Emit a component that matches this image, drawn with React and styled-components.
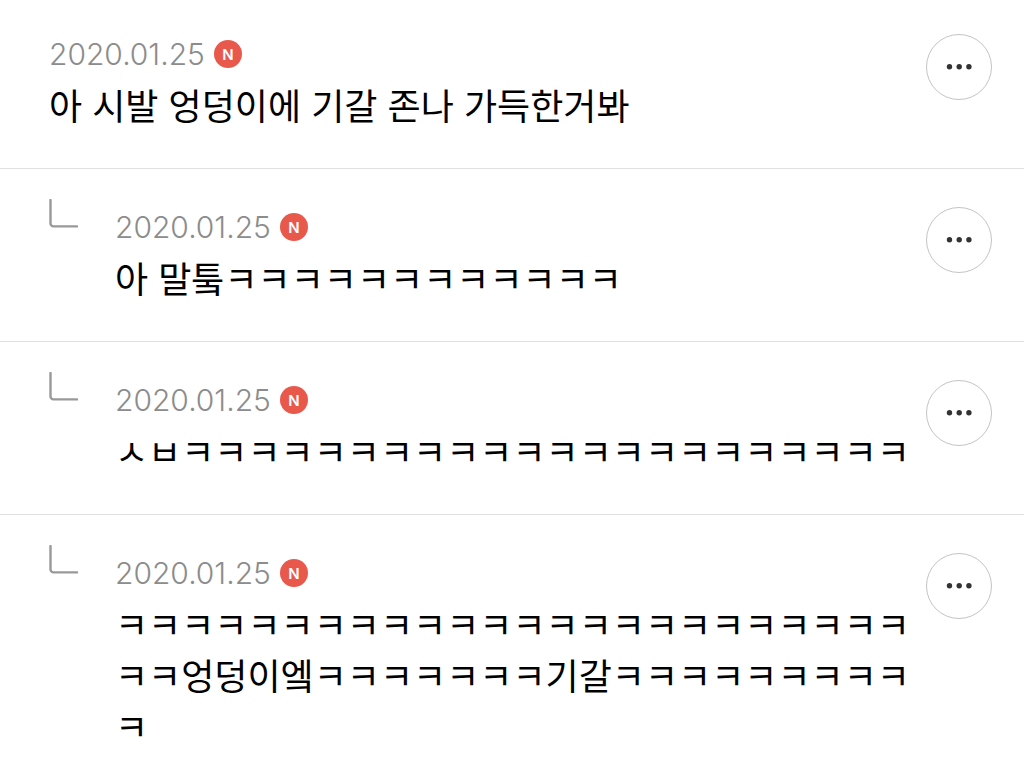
import React from 'react';
import styled, { createGlobalStyle } from 'styled-components';

const comments = [
    { id: 1, date: '2020.01.25', reply: false, text: '아 시발 엉덩이에 기갈 존나 가득한거봐' },
    { id: 2, date: '2020.01.25', reply: true, text: '아 말퉄' + 'ㅋ'.repeat(12) },
    { id: 3, date: '2020.01.25', reply: true, text: 'ㅅㅂ' + 'ㅋ'.repeat(22) },
    { id: 4, date: '2020.01.25', reply: true, text: 'ㅋ'.repeat(26) + '엉덩이엨' + 'ㅋ'.repeat(7) + '기갈' + 'ㅋ'.repeat(10) },
];

const Comment = ({ date, reply, text }) => (
    <Row>
        {reply && (
            <Elbow viewBox="0 0 30 30" aria-hidden="true">
                <path d="M1.5 1v23.4a3 3 0 0 0 3 3H28" />
            </Elbow>
        )}
        <Content>
            <Meta>
                <time>{date}</time>
                <NewBadge>N</NewBadge>
            </Meta>
            <Text>{text}</Text>
        </Content>
        <MoreButton type="button" aria-label="더보기">
            <svg width="28" height="8" viewBox="0 0 28 8">
                <circle cx="4.5" cy="3.7" r="2.7" />
                <circle cx="14.2" cy="3.7" r="2.7" />
                <circle cx="23.9" cy="3.7" r="2.7" />
            </svg>
        </MoreButton>
    </Row>
);

const App = () => (
    <>
        <GlobalStyle />
        <List>
            {comments.map((comment) => (
                <Comment key={comment.id} {...comment} />
            ))}
        </List>
    </>
);

export default App;

const GlobalStyle = createGlobalStyle`
    body {
        margin: 0;
        background: #fff;
        color: #000;
        font-family: Inter, "Noto Sans CJK KR", sans-serif;
    }
`;

const List = styled.ul`
    list-style: none;
    margin: 0;
    padding: 0;
`;

const Row = styled.li`
    display: flex;
    align-items: flex-start;
    padding: 30px 32px 35px 49px;
    border-bottom: 1px solid #e0e0e0;

    &:first-child {
        padding-top: 26px;
    }

    &:last-child {
        padding-bottom: 0;
        border-bottom: 0;
    }
`;

const Elbow = styled.svg`
    flex: none;
    width: 30px;
    height: 30px;
    margin-right: 36px;
    fill: none;
    stroke: #999;
    stroke-width: 2.4;
    stroke-linecap: round;
`;

const Content = styled.div`
    flex: 1;
    min-width: 0;
    padding-top: 6px;
`;

const Meta = styled.div`
    display: flex;
    align-items: center;
    gap: 9px;
    height: 44px;
    margin-bottom: 6px;
    color: #8c8c8c;
    font-size: 30px;
    font-weight: 300;
`;

const NewBadge = styled.span`
    display: flex;
    align-items: center;
    justify-content: center;
    width: 28px;
    height: 28px;
    border-radius: 50%;
    background: #e8594b;
    color: #fff;
    font-size: 15px;
    font-weight: 600;
`;

const Text = styled.p`
    margin: 0;
    font-size: 36px;
    line-height: 51px;
    word-break: break-all;
`;

const MoreButton = styled.button`
    display: flex;
    align-items: center;
    justify-content: center;
    flex: none;
    width: 66px;
    height: 66px;
    margin-top: 8px;
    padding: 0;
    border: 1px solid #c4c4c4;
    border-radius: 50%;
    background: #fff;
    color: #333;
    cursor: pointer;

    svg {
        fill: currentColor;
    }
`;
